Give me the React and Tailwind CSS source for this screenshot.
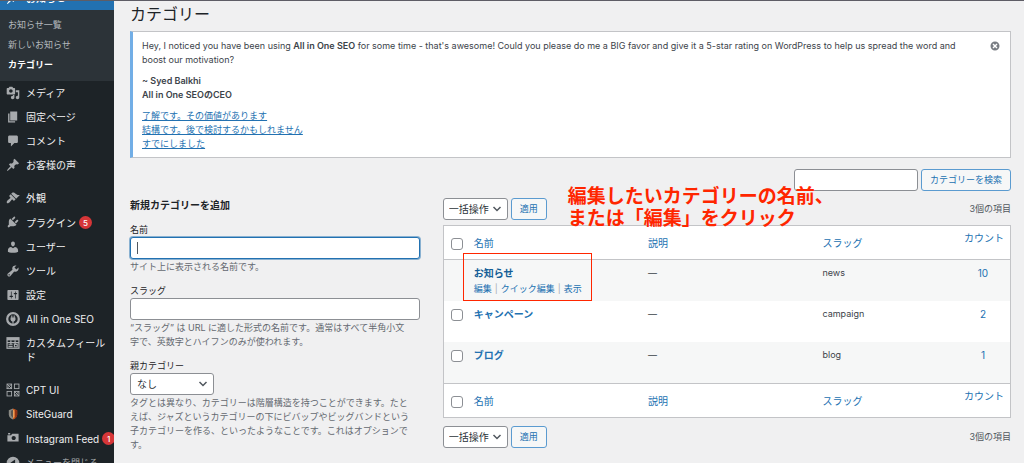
import clsx from 'clsx';

const iconPaths = {
  pin: 'M10.44 3.02l1.82-1.82 6.36 6.35-1.83 1.82c-1.05-.68-2.48-.57-3.41.36l-.75.75c-.92.93-1.04 2.35-.35 3.41l-1.83 1.82-2.41-2.41-2.8 2.79c-.42.42-3.38 2.71-3.8 2.29s1.86-3.39 2.28-3.81l2.79-2.79L4.1 9.36l1.83-1.82c1.05.69 2.48.57 3.4-.36l.75-.75c.93-.92 1.05-2.35.36-3.41z',
  media: 'M13 11V4c0-.55-.45-1-1-1h-1.67L9 1H5L3.67 3H2c-.55 0-1 .45-1 1v7c0 .55.45 1 1 1h10c.55 0 1-.45 1-1zM7 4.5c1.38 0 2.5 1.12 2.5 2.5S8.38 9.5 7 9.5 4.5 8.38 4.5 7 5.62 4.5 7 4.5zM14 6h5v10.5c0 1.38-1.12 2.5-2.5 2.5S14 17.88 14 16.5s1.12-2.5 2.5-2.5c.17 0 .34.02.5.05V9h-3V6zm-4 8.05V13h2v3.5c0 1.38-1.12 2.5-2.5 2.5S7 17.88 7 16.5 8.12 14 9.5 14c.17 0 .34.02.5.05z',
  page: 'M6 15V2h10v13H6zm-1 1h8v2H3V5h2v11z',
  comment: 'M5 2h10c1.1 0 2 .9 2 2v7c0 1.1-.9 2-2 2h-3l-5 5v-5H5c-1.1 0-2-.9-2-2V4c0-1.1.9-2 2-2z',
  appearance: 'M14.48 11.06L7.41 3.99l1.5-1.5c.5-.56 2.3-.47 3.51.32 1.21.8 1.43 1.28 2.91 2.1 1.18.64 2.45 1.26 4.45.85zm-.71.71L6.7 4.7 4.93 6.47c-.39.39-.39 1.02 0 1.41l1.06 1.06c.39.39.39 1.03 0 1.42-.6.6-1.43 1.11-2.21 1.69-.35.26-.7.53-1.01.84C1.43 14.23.4 16.08 1.4 17.07c.99 1 2.84-.03 4.18-1.36.31-.31.58-.66.85-1.02.57-.78 1.08-1.61 1.69-2.21.39-.39 1.02-.39 1.41 0l1.06 1.06c.39.39 1.02.39 1.41 0z',
  plugin: 'M13.11 4.36L9.87 7.6 8 5.73l3.24-3.24c.35-.34 1.05-.2 1.56.32.52.51.66 1.21.31 1.55zm-8 1.77l.91-1.12 9.01 9.01-1.19.84c-.71.71-2.63 1.16-3.82 1.16H6.14L4.9 17.26c-.59.59-1.54.59-2.12 0-.59-.58-.59-1.53 0-2.12l1.24-1.24v-3.88c0-1.13.4-3.19 1.09-3.89zm7.26 3.97l3.24-3.24c.34-.35 1.04-.21 1.55.31.52.51.66 1.21.31 1.55l-3.24 3.25z',
  user: 'M10 9.25c-2.27 0-2.73-3.44-2.73-3.44C7 4.02 7.82 2 9.97 2c2.16 0 2.98 2.02 2.71 3.81 0 0-.41 3.44-2.68 3.44zm0 2.57L12.72 10c2.39 0 4.52 2.33 4.52 4.53v2.49s-3.65 1.13-7.24 1.13c-3.65 0-7.24-1.13-7.24-1.13v-2.49c0-2.25 1.94-4.48 4.47-4.48z',
  tools: 'M16.68 9.77c-1.34 1.34-3.3 1.67-4.95.99l-5.41 6.52c-.99.99-2.59.99-3.58 0s-.99-2.59 0-3.57l6.52-5.42c-.68-1.65-.35-3.61.99-4.95 1.28-1.28 3.12-1.62 4.72-1.06l-2.89 2.89 2.82 2.82 2.86-2.87c.53 1.58.18 3.39-1.08 4.65zM3.81 16.21c.4.39 1.04.39 1.43 0 .4-.4.4-1.04 0-1.43-.39-.4-1.03-.4-1.43 0-.39.39-.39 1.03 0 1.43z',
  settings: 'M18 16V4c0-.55-.45-1-1-1H3c-.55 0-1 .45-1 1v12c0 .55.45 1 1 1h14c.55 0 1-.45 1-1zM8 11h1c.55 0 1 .45 1 1s-.45 1-1 1H8v1.5c0 .28-.22.5-.5.5s-.5-.22-.5-.5V13H6c-.55 0-1-.45-1-1s.45-1 1-1h1V5.5c0-.28.22-.5.5-.5s.5.22.5.5V11zm5-2h-1c-.55 0-1-.45-1-1s.45-1 1-1h1V5.5c0-.28.22-.5.5-.5s.5.22.5.5V7h1c.55 0 1 .45 1 1s-.45 1-1 1h-1v5.5c0 .28-.22.5-.5.5s-.5-.22-.5-.5V9z',
  camera: 'M6 5V3H3v2h3zm12 10V4H9L7 6H2v9h16zm-7-8c1.65 0 3 1.35 3 3s-1.35 3-3 3-3-1.35-3-3 1.35-3 3-3z',
  collapse: 'M10 1a9 9 0 1 0 0 18 9 9 0 0 0 0-18zm3 4v10l-7-5z',
  dismiss: 'M10 1a9 9 0 1 1 0 18 9 9 0 0 1 0-18zm5 12l-3-3 3-3-2-2-3 3-3-3-2 2 3 3-3 3 2 2 3-3 3 3z',
};

const Icon = ({ name, className = 'size-[14px]' }) => (
  <svg viewBox="0 0 20 20" fill="currentColor" fillRule="evenodd" aria-hidden="true" className={clsx('shrink-0', className)}>
    <path d={iconPaths[name]} />
  </svg>
);

const SeoIcon = () => (
  <svg viewBox="0 0 20 20" fill="none" stroke="currentColor" aria-hidden="true" className="size-[14px] shrink-0">
    <circle cx="10" cy="10" r="8.3" strokeWidth="3.2" />
    <path d="M8.3 5v4M11.7 5v4M10 12v5" strokeWidth="1.6" />
    <path d="M6.500 8h7v2.500a3.500 3.500 0 0 1-7 0z" fill="currentColor" stroke="none" />
  </svg>
);

const FieldsIcon = () => (
  <svg viewBox="0 0 20 20" fill="none" stroke="currentColor" aria-hidden="true" className="size-[14px] shrink-0">
    <rect x="1.5" y="2.5" width="17" height="15" strokeWidth="1.8" />
    <path d="M1.5 4.5h17" strokeWidth="3.5" />
    <path d="M1.5 9.500h17M7 6v6M13 6v6" strokeWidth="1.8" />
    <path d="M3.5 12.500h6M3.5 15.200h6" strokeWidth="1.6" />
    <rect x="12" y="12" width="4" height="3.5" strokeWidth="1.6" />
  </svg>
);

const CptIcon = () => (
  <svg viewBox="0 0 20 20" fill="none" stroke="currentColor" strokeWidth="1.3" aria-hidden="true" className="size-[14px] shrink-0">
    <rect x="1.5" y="1.5" width="6.5" height="6.5" />
    <rect x="12" y="1.5" width="6.5" height="6.5" />
    <rect x="1.5" y="12" width="6.5" height="6.5" />
    <rect x="12" y="12" width="6.5" height="6.5" />
    <path d="M1.5 1.5L8 8M8 1.5L1.5 8M12 12l6.5 6.5M18.5 12L12 18.5" />
  </svg>
);

const ShieldIcon = () => (
  <svg viewBox="0 0 20 20" aria-hidden="true" className="size-[14px] shrink-0">
    <path d="M10 2L4 4.500V11c0 3 2.500 5.500 6 7z" fill="#8a8a84" />
    <path d="M10 2l6 2.500V11c0 3-2.500 5.500-6 7z" fill="#c8571b" />
    <path d="M7 5.500L10 4v11.500c-2-1.200-3-3-3-5z" fill="#5b5650" />
    <path d="M10 4l2 1v9l-2 2z" fill="#e8a05c" />
    <path d="M13 4l3 1v6c0 2-1.200 4-3 5.500z" fill="#8d3216" />
  </svg>
);

const Chevron = () => (
  <svg
    viewBox="0 0 10 10"
    fill="none"
    stroke="#50575e"
    strokeWidth="1.5"
    aria-hidden="true"
    className="pointer-events-none absolute right-1.5 top-1.5 size-[10px]"
  >
    <path d="M1.5 3L5 6.5 8.5 3" />
  </svg>
);

const subItems = [
  { label: 'お知らせ一覧' },
  { label: '新しいお知らせ' },
  { label: 'カテゴリー', active: true },
];

const menuGroups = [
  [
    { label: 'メディア', icon: <Icon name="media" /> },
    { label: '固定ページ', icon: <Icon name="page" /> },
    { label: 'コメント', icon: <Icon name="comment" /> },
    { label: 'お客様の声', icon: <Icon name="pin" /> },
  ],
  [
    { label: '外観', icon: <Icon name="appearance" /> },
    { label: 'プラグイン', icon: <Icon name="plugin" />, badge: 5 },
    { label: 'ユーザー', icon: <Icon name="user" /> },
    { label: 'ツール', icon: <Icon name="tools" /> },
    { label: '設定', icon: <Icon name="settings" /> },
    { label: 'All in One SEO', icon: <SeoIcon /> },
    { label: 'カスタムフィールド', icon: <FieldsIcon /> },
  ],
  [
    { label: 'CPT UI', icon: <CptIcon /> },
    { label: 'SiteGuard', icon: <ShieldIcon /> },
    { label: 'Instagram Feed', icon: <Icon name="camera" />, badge: 1 },
  ],
];

const categories = [
  { name: 'お知らせ', slug: 'news', count: 10, hovered: true },
  { name: 'キャンペーン', slug: 'campaign', count: 2 },
  { name: 'ブログ', slug: 'blog', count: 1 },
];

const fieldClass = 'h-[22px] rounded-[3px] border border-[#8c8f94] bg-white text-[10px] text-[#2c3338]';
const buttonClass = 'h-[22px] rounded-[3px] border border-[#5b9bd0] bg-[#f6f7f7] px-2 text-[9px] text-[#2271b1]';

const MenuItem = ({ item }) => (
  <li>
    <a href="#" className="flex items-start gap-1.5 py-[5px] pl-1.5 leading-[14px] text-[#f0f0f1]">
      <span className="text-[#a7aaad]">{item.icon}</span>
      <span className={clsx('flex items-center gap-[3px]', item.badge && 'whitespace-nowrap')}>
        <span>{item.label}</span>
        {item.badge && (
          <span className="my-px flex size-[13px] shrink-0 items-center justify-center rounded-full bg-[#d63638] text-[8px] font-medium text-white">
            {item.badge}
          </span>
        )}
      </span>
    </a>
  </li>
);

const Sidebar = () => (
  <nav className="w-[114px] shrink-0 overflow-hidden bg-[#1d2327] text-[10px]">
    {/* The menu is scrolled, so its current item is mostly out of view */}
    <div className="-mt-[15px]">
      <a href="#" className="flex items-start gap-1.5 bg-[#2271b1] py-[5px] pl-1.5 font-medium leading-[14px] text-white">
        <Icon name="pin" />
        お知らせ
      </a>
      <ul className="bg-[#2c3338] pb-1.5 pt-[5px] text-[9px] leading-5">
        {subItems.map((item) => (
          <li key={item.label}>
            <a href="#" className={clsx('block pl-2', item.active ? 'font-bold text-white' : 'text-[#b4b9be]')}>
              {item.label}
            </a>
          </li>
        ))}
      </ul>
      <div className="flex flex-col gap-[9px]">
        {menuGroups.map((group, index) => (
          <ul key={index}>
            {group.map((item) => (
              <MenuItem key={item.label} item={item} />
            ))}
          </ul>
        ))}
      </div>
      <button type="button" className="flex items-start gap-1.5 whitespace-nowrap py-[5px] pl-1.5 text-[9px] leading-[14px] text-[#a7aaad]">
        <Icon name="collapse" />
        メニューを閉じる
      </button>
    </div>
  </nav>
);

const Notice = () => (
  <div className="mt-[7px] flex items-start justify-between border border-l-[3px] border-[#c3c4c7] border-l-[#72aee6] bg-white pb-1.5 pl-[9px] pr-2.5 pt-[7px]">
    <div className="flex flex-col gap-[7px]">
      <p>
        Hey, I noticed you have been using <strong className="font-semibold">All in One SEO</strong> for some time - that's
        awesome! Could you please do me a BIG favor and give it a 5-star rating on WordPress to help us spread the word and
        <br />
        boost our motivation?
      </p>
      <p className="font-semibold">
        ~ Syed Balkhi
        <br />
        All in One SEOのCEO
      </p>
      <ul className="text-[#2271b1] underline">
        <li><a href="#">了解です。その価値があります</a></li>
        <li><a href="#">結構です。後で検討するかもしれません</a></li>
        <li><a href="#">すでにしました</a></li>
      </ul>
    </div>
    <button type="button" aria-label="この通知を非表示にする" className="mt-0.5 text-[#787c82]">
      <Icon name="dismiss" className="size-[10px]" />
    </button>
  </div>
);

const AddCategoryForm = () => (
  <form className="text-[#646970]">
    <h2 className="text-[10px] font-bold text-[#1d2327]">新規カテゴリーを追加</h2>
    <div className="mt-[11px]">
      <label htmlFor="tag-name" className="block text-[#1d2327]">名前</label>
      <div className="relative">
        <input
          id="tag-name"
          type="text"
          className="block h-[22px] w-full rounded-[3px] border border-[#2271b1] bg-white px-1.5 text-[10px] ring-1 ring-[#2271b1]/50 outline-none"
        />
        <span className="absolute left-[7px] top-[5px] h-3 w-px bg-[#50575e]" />
      </div>
      <p className="mt-px pr-2">サイト上に表示される名前です。</p>
    </div>
    <div className="mt-2.5">
      <label htmlFor="tag-slug" className="block text-[#1d2327]">スラッグ</label>
      <input id="tag-slug" type="text" className={clsx(fieldClass, 'block w-full px-1.5')} />
      <p className="mt-px pr-2">“スラッグ” は URL に適した形式の名前です。通常はすべて半角小文字で、英数字とハイフンのみが使われます。</p>
    </div>
    <div className="mt-2.5">
      <label htmlFor="parent" className="block text-[#1d2327]">親カテゴリー</label>
      <div className="relative w-[84px]">
        <select id="parent" className={clsx(fieldClass, 'block w-full appearance-none pl-1.5')}>
          <option>なし</option>
        </select>
        <Chevron />
      </div>
      <p className="mt-px pr-2">
        タグとは異なり、カテゴリーは階層構造を持つことができます。たとえば、ジャズというカテゴリーの下にビバップやビッグバンドという子カテゴリーを作る、といったようなことです。これはオプションです。
      </p>
    </div>
  </form>
);

const BulkActions = ({ id }) => (
  <div className="flex items-center gap-[3px]">
    <div className="relative w-[65px]">
      <select id={id} aria-label="一括操作を選択" className={clsx(fieldClass, 'block w-full appearance-none pl-[5px]')}>
        <option>一括操作</option>
      </select>
      <Chevron />
    </div>
    <button type="button" className={buttonClass}>適用</button>
    <span className="ml-auto text-[#50575e]">3個の項目</span>
  </div>
);

const Checkbox = ({ label }) => (
  <input
    type="checkbox"
    aria-label={label}
    className="block size-3 appearance-none rounded-[3px] border border-[#8c8f94] bg-white"
  />
);

const HeadingRow = ({ cellClass }) => (
  <tr className="h-[34px] bg-white text-left text-[10px] text-[#2271b1]">
    <td className={clsx('pl-[7px] pt-0.5', cellClass)}><Checkbox label="すべて選択" /></td>
    <th className={clsx('pl-2 font-normal', cellClass)}><a href="#">名前</a></th>
    <th className={clsx('pl-2 font-normal', cellClass)}><a href="#">説明</a></th>
    <th className={clsx('pl-2 font-normal', cellClass)}><a href="#">スラッグ</a></th>
    <th className={clsx('whitespace-nowrap pl-2 pt-[5px] align-top font-normal', cellClass)}><a href="#">カウント</a></th>
  </tr>
);

const CategoryTable = () => (
  <table className="mb-2 mt-[5px] w-full table-fixed border-separate border-spacing-0 border border-[#c3c4c7]">
    <colgroup>
      <col className="w-[22px]" />
      <col />
      <col />
      <col className="w-[25%]" />
      <col className="w-[54px]" />
    </colgroup>
    <thead>
      <HeadingRow cellClass="border-b border-[#c3c4c7]" />
    </thead>
    <tbody>
      {categories.map((category) => (
        <tr key={category.slug} className="h-[41px] bg-white align-top odd:bg-[#f6f7f7]">
          <td className="pl-[7px] pt-2">
            {!category.hovered && <Checkbox label={`${category.name}を選択`} />}
          </td>
          <td className="whitespace-nowrap pl-2 pt-1.5 text-[#2271b1]">
            <a href="#" className={clsx('block text-[10px] font-bold', category.hovered && 'text-[#135e96]')}>
              {category.name}
            </a>
            {category.hovered && (
              <div className="mt-0.5 flex gap-[3px]">
                <a href="#">編集</a>
                <span className="text-[#a7aaad]">|</span>
                <a href="#">クイック編集</a>
                <span className="text-[#a7aaad]">|</span>
                <a href="#">表示</a>
              </div>
            )}
          </td>
          <td className="pl-2 pt-1.5">—</td>
          <td className="pl-2 pt-1.5">{category.slug}</td>
          <td className="pt-1.5 text-center text-[10px] text-[#2271b1]"><a href="#">{category.count}</a></td>
        </tr>
      ))}
    </tbody>
    <tfoot>
      <HeadingRow cellClass="border-t border-[#c3c4c7]" />
    </tfoot>
  </table>
);

const App = () => {
  return (
    <div className="flex h-screen flex-col overflow-hidden bg-[#f0f0f1] font-[Inter,'Noto_Sans_CJK_JP',sans-serif] text-[9px] leading-[14px] text-[#3c434a]">
      <div className="h-px shrink-0 bg-[#5e5d66]" />
      <div className="flex min-h-0 flex-1">
        <Sidebar />
        <main className="min-w-0 flex-1 pl-4 pr-[13px]">
          <h1 className="pt-[3px] text-[16px] leading-5 text-[#1d2327]">カテゴリー</h1>
          <Notice />
          <form className="mt-[11px] flex justify-end gap-[3px]">
            <input type="search" aria-label="カテゴリーを検索" className={clsx(fieldClass, 'w-[124px] px-1.5')} />
            <button type="submit" className={buttonClass}>カテゴリーを検索</button>
          </form>
          <div className="mt-[7px] grid grid-cols-[51fr_100fr] gap-[23px]">
            <AddCategoryForm />
            <section className="relative">
              <BulkActions id="bulk-top" />
              <CategoryTable />
              <BulkActions id="bulk-bottom" />

              {/* Tutorial callout */}
              <p className="absolute -top-3 left-[125px] whitespace-nowrap text-[19px] font-bold leading-[22px] text-[#ff2600]">
                編集したいカテゴリーの名前、
                <br />
                または「編集」をクリック
              </p>
              <div className="absolute left-5 top-[55px] h-12 w-[129px] border border-[#ff2600]" />
            </section>
          </div>
        </main>
      </div>
    </div>
  );
};

export default App;
